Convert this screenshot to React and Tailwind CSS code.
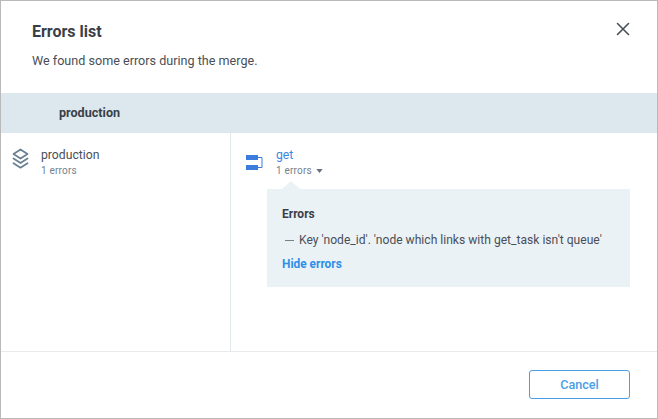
import React from 'react';

const LayersIcon = () => (
  <svg width="17" height="22" viewBox="0 0 17 22" fill="none" stroke="#6b8192" strokeWidth="1.8" strokeLinejoin="round" strokeLinecap="round">
    <path d="M8.5 1.5 15.5 6 8.5 10.5 1.5 6Z" />
    <path d="M1.5 10.5 8.5 15 15.5 10.5" />
    <path d="M1.5 15.2 8.5 19.7 15.5 15.2" />
  </svg>
);

const QueueIcon = () => (
  <svg width="17" height="16" viewBox="0 0 17 16" fill="none">
    <rect x="0" y="0" width="12" height="5" fill="#3b7ddd" />
    <rect x="0" y="10" width="12" height="5" fill="#3b7ddd" />
    <path d="M12 2.5H16V12.5H12" stroke="#3b7ddd" strokeWidth="1" />
  </svg>
);

const CloseIcon = () => (
  <svg width="14" height="14" viewBox="0 0 14 14" fill="none" stroke="#4a5059" strokeWidth="1.6" strokeLinecap="round">
    <path d="M1.5 1.5 12.5 12.5M12.5 1.5 1.5 12.5" />
  </svg>
);

export default function App() {
  return (
    <div className="w-[658px] h-[419px] bg-white border border-[#b9b9b9] flex flex-col font-['Roboto',sans-serif] overflow-hidden">
      <div className="h-[92px] shrink-0 pl-[31px] pr-[27px] flex justify-between">
        <div>
          <h1 className="mt-[21px] text-[16px] leading-[20px] font-bold text-[#3a3f47]">Errors list</h1>
          <p className="mt-[10px] text-[12.6px] leading-[18px] text-[#4a4f57]">We found some errors during the merge.</p>
        </div>
        <button className="mt-[21px] h-[14px]"><CloseIcon /></button>
      </div>

      <div className="h-[40px] shrink-0 bg-[#dde8ee] pl-[58px] flex items-center text-[12.6px] font-bold text-[#3a3f47]">
        production
      </div>

      <div className="flex-1 flex min-h-0">
        <div className="w-[230px] shrink-0 border-r border-[#e3e8eb] pl-[11px] pt-[14px] flex gap-[12px]">
          <div className="pt-[1px]"><LayersIcon /></div>
          <div>
            <div className="text-[12.2px] leading-[16px] text-[#4a4f57]">production</div>
            <div className="mt-[1px] text-[10px] leading-[13px] tracking-[0.2px] text-[#75818d]">1 errors</div>
          </div>
        </div>

        <div className="flex-1 pl-[15px] pt-[14px] pr-[27px]">
          <div className="flex gap-[13px]">
            <div className="pt-[8px]"><QueueIcon /></div>
            <div>
              <div className="text-[12.2px] leading-[16px] text-[#3b86e0]">get</div>
              <div className="mt-[1px] flex items-center gap-[4px] text-[10px] leading-[13px] tracking-[0.2px] text-[#75818d]">
                1 errors
                <svg width="7" height="4" viewBox="0 0 8 5" fill="#66727e"><path d="M0 0h8L4 5Z" /></svg>
              </div>
            </div>
          </div>

          <div className="relative mt-[12px] ml-[21px] h-[98px] bg-[#ebf2f6] pl-[15px] pt-[18px]">
            <div className="absolute -top-[8px] left-[15px] w-0 h-0 border-l-[9px] border-r-[9px] border-b-[8px] border-l-transparent border-r-transparent border-b-[#ebf2f6]" />
            <div className="text-[12px] leading-[14px] font-bold text-[#3a3f47]">Errors</div>
            <div className="mt-[12px] flex items-center text-[12.1px] leading-[14px] text-[#4a4f57]">
              <span className="w-[9px] h-[1px] bg-[#777f87] mr-[5px] ml-[3px]" />
              Key 'node_id'. 'node which links with get_task isn't queue'
            </div>
            <div className="mt-[10px] text-[11.9px] leading-[14px] font-bold text-[#2f8fe6]">Hide errors</div>
          </div>
        </div>
      </div>

      <div className="h-[67px] shrink-0 border-t border-[#e8ebed] flex justify-end items-start pt-[18px] pr-[27px]">
        <button className="w-[101px] h-[29px] rounded-[3px] border border-[#4a9ee6] text-[12.6px] pt-[1px] font-medium text-[#4a9ee6]">Cancel</button>
      </div>
    </div>
  );
}
